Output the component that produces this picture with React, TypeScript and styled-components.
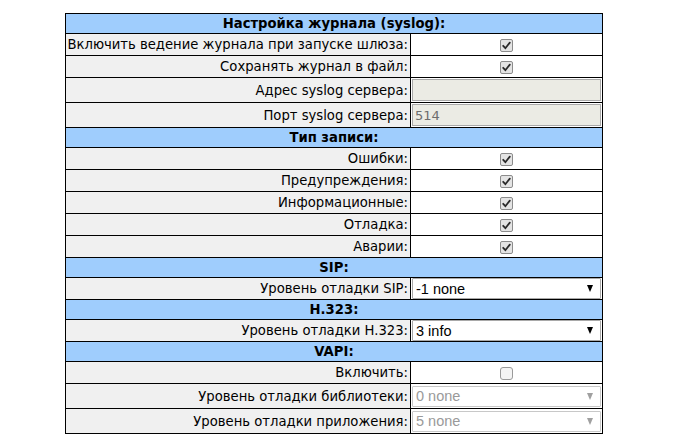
import React from "react";
import styled, { createGlobalStyle } from "styled-components";

const GlobalStyle = createGlobalStyle`
  body {
    margin: 0;
    background: #ffffff;
    font-family: "DejaVu Sans", Verdana, sans-serif;
  }
`;

type Row =
  | { kind: "header"; title: string }
  | { kind: "check"; label: string; checked: boolean }
  | { kind: "text"; label: string; value: string }
  | { kind: "select"; label: string; value: string; disabled?: boolean; tall?: boolean };

const rows: Row[] = [
  { kind: "header", title: "Настройка журнала (syslog):" },
  { kind: "check", label: "Включить ведение журнала при запуске шлюза:", checked: true },
  { kind: "check", label: "Сохранять журнал в файл:", checked: true },
  { kind: "text", label: "Адрес syslog сервера:", value: "" },
  { kind: "text", label: "Порт syslog сервера:", value: "514" },
  { kind: "header", title: "Тип записи:" },
  { kind: "check", label: "Ошибки:", checked: true },
  { kind: "check", label: "Предупреждения:", checked: true },
  { kind: "check", label: "Информационные:", checked: true },
  { kind: "check", label: "Отладка:", checked: true },
  { kind: "check", label: "Аварии:", checked: true },
  { kind: "header", title: "SIP:" },
  { kind: "select", label: "Уровень отладки SIP:", value: "-1 none" },
  { kind: "header", title: "H.323:" },
  { kind: "select", label: "Уровень отладки H.323:", value: "3 info" },
  { kind: "header", title: "VAPI:" },
  { kind: "check", label: "Включить:", checked: false },
  { kind: "select", label: "Уровень отладки библиотеки:", value: "0 none", disabled: true, tall: true },
  { kind: "select", label: "Уровень отладки приложения:", value: "5 none", disabled: true, tall: true },
];

const Page = styled.div`
  padding: 13px 0 0 65px;
`;

const Table = styled.table`
  width: 538px;
  border-collapse: collapse;
  border: 1px solid #000;
  font-size: 13.2px;
  color: #000;
`;

const HeaderCell = styled.td`
  height: 19px;
  padding: 0;
  background: #9fcdfd;
  border: 1px solid #000;
  text-align: center;
  font-weight: bold;
  line-height: 18px;
`;

const LabelCell = styled.td<{ $h: number }>`
  width: 342px;
  height: ${(p) => p.$h}px;
  padding: 0 2px 0 0;
  background: #f0f0f0;
  border: 1px solid #000;
  text-align: right;
  white-space: nowrap;
`;

const ValueCell = styled.td`
  padding: 0 1px;
  background: #fff;
  border: 1px solid #000;
  text-align: center;
`;

const Check = styled.span<{ $on: boolean }>`
  display: inline-flex;
  align-items: center;
  justify-content: center;
  width: 11px;
  height: 11px;
  margin-top: 2px;
  border: 1px solid ${(p) => (p.$on ? "#8c8c8c" : "#9a9a9a")};
  border-radius: ${(p) => (p.$on ? "2px" : "3px")};
  background: ${(p) => (p.$on ? "#e4e4e4" : "#f4f4f4")};
  vertical-align: middle;
`;

const TextBox = styled.div`
  display: flex;
  align-items: center;
  height: 20px;
  padding: 0 2px;
  border: 1px solid #a9a9a9;
  background: #ebebe4;
  color: #6d6d6d;
  font-size: 13px;
  text-align: left;
`;

const SelectBox = styled.div<{ $disabled?: boolean }>`
  display: flex;
  align-items: center;
  justify-content: space-between;
  height: 19px;
  padding: 0 7px 0 3px;
  border: 1px solid ${(p) => (p.$disabled ? "#c8c8c8" : "#a9a9a9")};
  border-radius: 1px;
  background: #fff;
  color: ${(p) => (p.$disabled ? "#9a9a9a" : "#000")};
  font-family: "Liberation Sans", Arial, sans-serif;
  font-size: 14.5px;
  text-align: left;
`;

const Arrow = styled.span<{ $disabled?: boolean }>`
  width: 0;
  height: 0;
  border-left: 3.5px solid transparent;
  border-right: 3.5px solid transparent;
  border-top: 7px solid ${(p) => (p.$disabled ? "#a0a0a0" : "#000")};
`;

const CheckMark: React.FC = () => (
  <svg width="9" height="9" viewBox="0 0 9 9">
    <path d="M1.2 4.8 L3.4 7.2 L7.8 1.6" fill="none" stroke="#2a2a2a" strokeWidth="1.8" strokeLinecap="round" />
  </svg>
);

const heightOf = (r: Row): number => {
  if (r.kind === "text") return 24;
  if (r.kind === "select" && r.tall) return 24;
  return 21;
};

const App: React.FC = () => {
  return (
    <Page>
      <GlobalStyle />
      <Table>
        <tbody>
          {rows.map((r, i) => {
            if (r.kind === "header") {
              return (
                <tr key={i}>
                  <HeaderCell colSpan={2}>{r.title}</HeaderCell>
                </tr>
              );
            }
            return (
              <tr key={i}>
                <LabelCell $h={heightOf(r)}>{r.label}</LabelCell>
                <ValueCell>
                  {r.kind === "check" && <Check $on={r.checked}>{r.checked && <CheckMark />}</Check>}
                  {r.kind === "text" && <TextBox>{r.value}</TextBox>}
                  {r.kind === "select" && (
                    <SelectBox $disabled={r.disabled}>
                      <span>{r.value}</span>
                      <Arrow $disabled={r.disabled} />
                    </SelectBox>
                  )}
                </ValueCell>
              </tr>
            );
          })}
        </tbody>
      </Table>
    </Page>
  );
};

export default App;
